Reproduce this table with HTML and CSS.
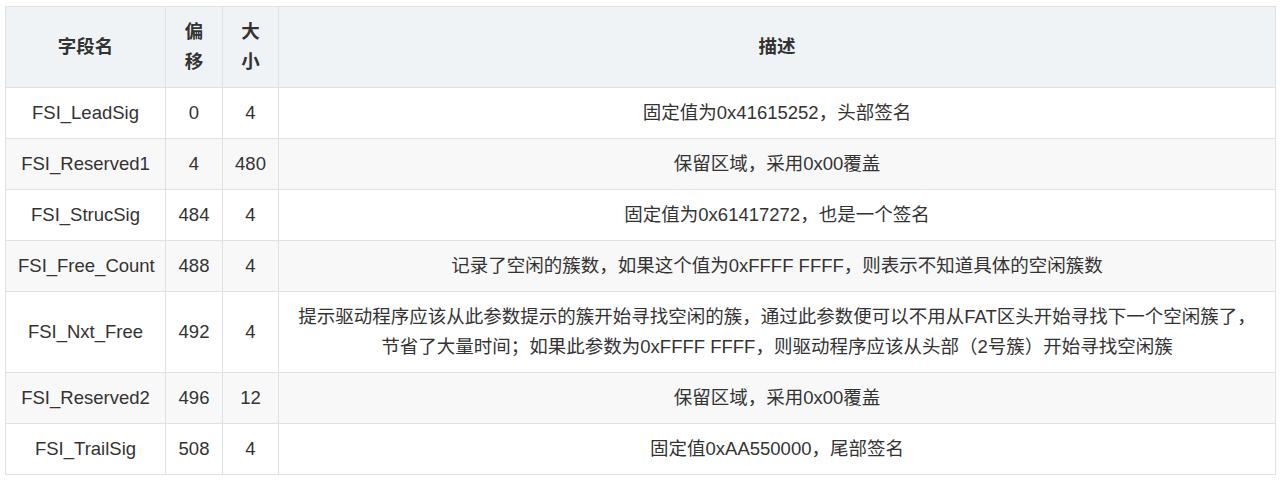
FILE: index.html
```html
<!DOCTYPE html>
<html lang="zh-CN">
<head>
<meta charset="utf-8">
<title>FSInfo</title>
<link rel="stylesheet" href="styles.css">
</head>
<body>
<table class="tbl">
  <colgroup>
    <col class="c-name">
    <col class="c-off">
    <col class="c-size">
    <col class="c-desc">
  </colgroup>
  <thead>
    <tr><th>字段名</th><th>偏移</th><th>大小</th><th>描述</th></tr>
  </thead>
  <tbody>
    <tr><td>FSI_LeadSig</td><td>0</td><td>4</td><td>固定值为0x41615252，头部签名</td></tr>
    <tr><td>FSI_Reserved1</td><td>4</td><td>480</td><td>保留区域，采用0x00覆盖</td></tr>
    <tr><td>FSI_StrucSig</td><td>484</td><td>4</td><td>固定值为0x61417272，也是一个签名</td></tr>
    <tr><td>FSI_Free_Count</td><td>488</td><td>4</td><td>记录了空闲的簇数，如果这个值为0xFFFF FFFF，则表示不知道具体的空闲簇数</td></tr>
    <tr><td>FSI_Nxt_Free</td><td>492</td><td>4</td><td>提示驱动程序应该从此参数提示的簇开始寻找空闲的簇，通过此参数便可以不用从FAT区头开始寻找下一个空闲簇了，节省了大量时间；如果此参数为0xFFFF FFFF，则驱动程序应该从头部（2号簇）开始寻找空闲簇</td></tr>
    <tr><td>FSI_Reserved2</td><td>496</td><td>12</td><td>保留区域，采用0x00覆盖</td></tr>
    <tr><td>FSI_TrailSig</td><td>508</td><td>4</td><td>固定值0xAA550000，尾部签名</td></tr>
  </tbody>
</table>
</body>
</html>
```

FILE: styles.css
```css
html, body {
  margin: 0;
  background: #ffffff;
}
body {
  padding: 6px 6px 0 5px;
  font-family: "Liberation Sans", "Noto Sans CJK SC", sans-serif;
  font-size: 18.5px;
  color: #333333;
}
.tbl {
  border-collapse: collapse;
  table-layout: fixed;
  width: 1270px;
}
.c-name { width: 160px; }
.c-off { width: 57px; }
.c-size { width: 56px; }
.c-desc { width: 997px; }
.tbl th, .tbl td {
  border: 1px solid #dfe2e5;
  padding: 10px 12px;
  line-height: 30px;
  text-align: center;
  vertical-align: middle;
}
.tbl th {
  background: #eff3f6;
  font-weight: bold;
}
.tbl tbody tr:nth-child(even) td {
  background: #f8f8f8;
}
```
